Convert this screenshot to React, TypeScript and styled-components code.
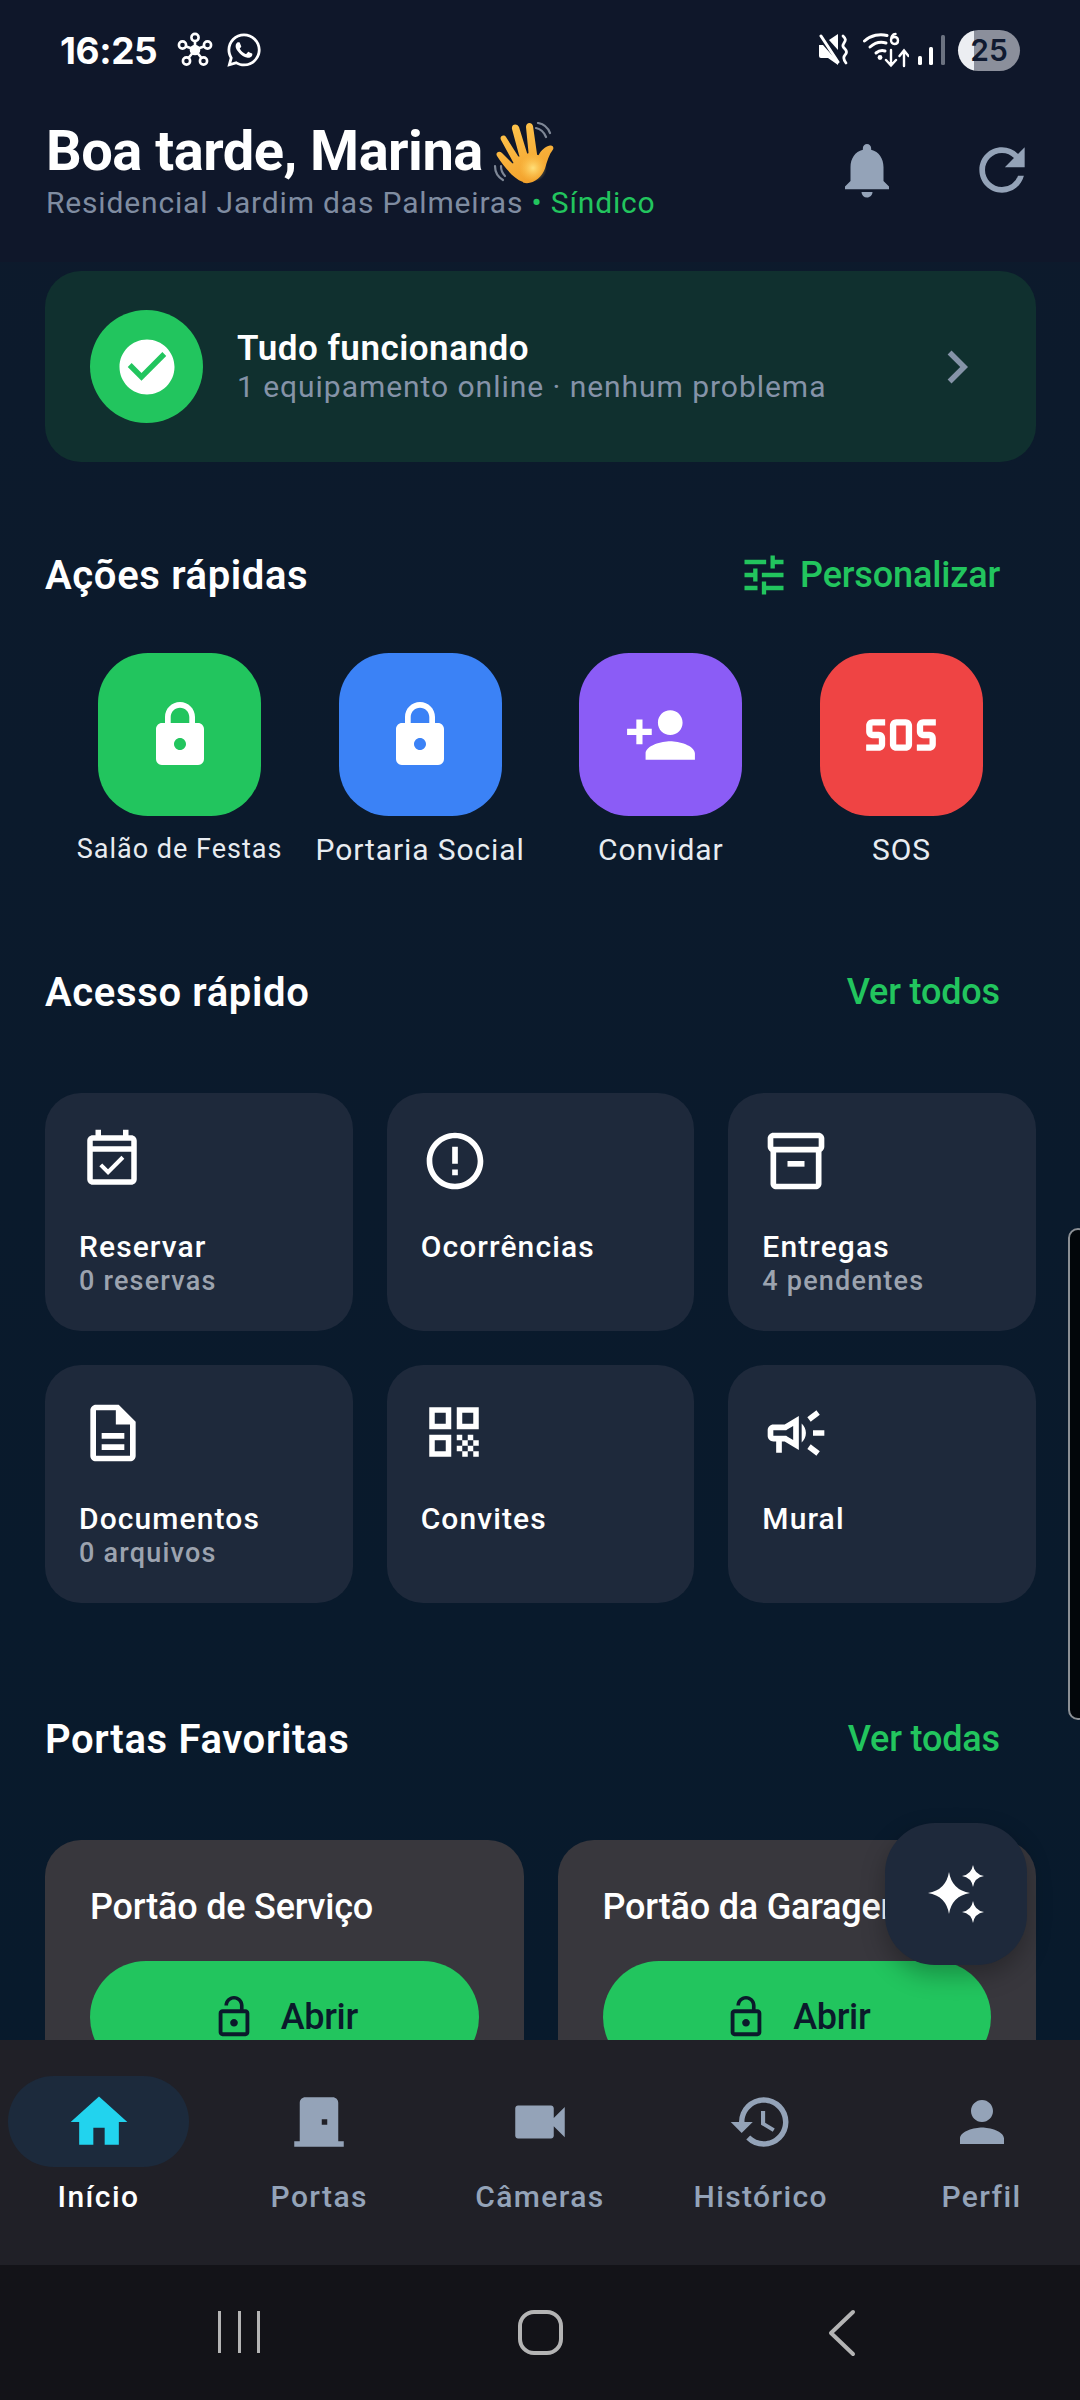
import React from "react";
import styled, { createGlobalStyle } from "styled-components";
import {
  MdLock,
  MdNotifications,
  MdRefresh,
  MdTune,
  MdPersonAdd,
  MdSos,
  MdOutlineEventAvailable,
  MdErrorOutline,
  MdOutlineInventory2,
  MdOutlineDescription,
  MdQrCode,
  MdOutlineCampaign,
  MdHome,
  MdDoorFront,
  MdVideocam,
  MdHistory,
  MdPerson,
  MdLockOpen,
  MdCheckCircle,
  MdChevronRight,
} from "react-icons/md";
import { FaWhatsapp } from "react-icons/fa";

const GlobalStyle = createGlobalStyle`
  html, body {
    margin: 0;
    padding: 0;
    background: #0a1a2b;
  }
  * {
    box-sizing: border-box;
  }
`;

const Screen = styled.div`
  position: relative;
  width: 1080px;
  height: 2400px;
  overflow: hidden;
  display: flex;
  flex-direction: column;
  font-family: Roboto, "Liberation Sans", sans-serif;
  background: linear-gradient(180deg, #0d1a2c 0%, #071a2c 100%);
  color: #ffffff;
`;

const Top = styled.div`
  height: 262px;
  background: #0f172a;
  flex: none;
`;

const StatusBar = styled.div`
  height: 118px;
  padding: 28px 60px 0 60px;
  display: flex;
  align-items: flex-start;
  justify-content: space-between;
`;

const StatusLeft = styled.div`
  display: flex;
  align-items: center;
  gap: 12px;
  height: 44px;
`;

const Clock = styled.span`
  font-family: Inter, Roboto, sans-serif;
  font-size: 37px;
  font-weight: 700;
  letter-spacing: -0.4px;
  margin-right: 8px;
`;

const StatusRight = styled.div`
  display: flex;
  align-items: center;
  gap: 9px;
  height: 44px;
`;

const Battery = styled.div`
  width: 62px;
  height: 41px;
  border-radius: 21px;
  background: linear-gradient(90deg, #eceef2 0 16px, #8b8f9b 16px 100%);
  display: flex;
  align-items: center;
  justify-content: center;
  color: #101a30;
  font-family: Inter, Roboto, sans-serif;
  font-size: 30px;
  font-weight: 600;
`;

const Header = styled.div`
  padding: 0 44px 0 46px;
  display: flex;
  justify-content: space-between;
`;

const Greeting = styled.h1`
  margin: 0;
  height: 66px;
  display: flex;
  align-items: center;
  gap: 10px;
  font-size: 56px;
  line-height: 66px;
  font-weight: 700;
  letter-spacing: -0.5px;
`;

const HandSlot = styled.span`
  display: flex;
  margin-top: 8px;
`;

const Place = styled.div`
  margin-top: 1px;
  font-size: 30px;
  line-height: 36px;
  letter-spacing: 0.83px;
  color: #7f8ca1;
`;

const Role = styled.span`
  color: #22c55e;
`;

const HeaderActions = styled.div`
  display: flex;
  align-items: center;
  gap: 68px;
  height: 68px;
  margin-top: 18px;
  color: #94a3b8;
`;

const Content = styled.div`
  flex: 1;
  padding: 9px 44px 0 45px;
  min-height: 0;
`;

const StatusCard = styled.div`
  height: 191px;
  border-radius: 36px;
  background: #10302f;
  display: flex;
  align-items: center;
  padding: 0 46px 0 45px;
`;

const StatusCircle = styled.div`
  width: 113px;
  height: 113px;
  border-radius: 50%;
  background: #22c55e;
  color: #ffffff;
  display: flex;
  align-items: center;
  justify-content: center;
  margin-right: 34px;
`;

const StatusText = styled.div`
  flex: 1;
`;

const StatusTitle = styled.div`
  font-size: 35px;
  font-weight: 600;
  line-height: 41px;
  letter-spacing: 0.5px;
`;

const StatusSub = styled.div`
  font-size: 30px;
  line-height: 36px;
  letter-spacing: 0.96px;
  color: #8593a8;
`;

const SectionHead = styled.div<{ $top: number }>`
  margin-top: ${(p) => p.$top}px;
  height: 56px;
  display: flex;
  align-items: center;
  justify-content: space-between;
  padding-right: 36px;
`;

const SectionTitle = styled.h2`
  margin: 0;
  font-size: 40px;
  font-weight: 600;
  letter-spacing: 0.65px;
`;

const SectionLink = styled.div`
  display: flex;
  align-items: center;
  gap: 10px;
  font-size: 36px;
  font-weight: 500;
  letter-spacing: -0.15px;
  color: #22c55e;
`;

const QuickRow = styled.div`
  margin-top: 50px;
  padding-left: 53px;
  display: flex;
  gap: 77.67px;
`;

const QuickItem = styled.div`
  width: 163px;
  display: flex;
  flex-direction: column;
  align-items: center;
`;

const QuickTile = styled.div<{ $color: string }>`
  width: 163px;
  height: 163px;
  border-radius: 50px;
  background: ${(p) => p.$color};
  display: flex;
  align-items: center;
  justify-content: center;
  color: #ffffff;
`;

const QuickLabel = styled.div<{ $small?: boolean }>`
  margin-top: ${(p) => (p.$small ? 15 : 16)}px;
  font-size: ${(p) => (p.$small ? 27 : 30)}px;
  line-height: 36px;
  letter-spacing: ${(p) => (p.$small ? 1 : 0.9)}px;
  white-space: nowrap;
  color: #e8ecf1;
`;

const AccessGrid = styled.div`
  margin-top: 73px;
  display: grid;
  grid-template-columns: repeat(3, 1fr);
  gap: 34px;
`;

const AccessCard = styled.div`
  height: 238px;
  border-radius: 36px;
  background: #1e293b;
  padding: 34px 34px 0;
`;

const AccessIcon = styled.div`
  height: 64px;
  color: #ffffff;
`;

const AccessTitle = styled.div`
  margin-top: 38px;
  font-size: 30px;
  line-height: 36px;
  font-weight: 500;
  letter-spacing: 1.1px;
`;

const AccessSub = styled.div`
  font-size: 27px;
  line-height: 33px;
  font-weight: 500;
  letter-spacing: 1.2px;
  color: #9ca3af;
`;

const DoorRow = styled.div`
  margin-top: 73px;
  display: grid;
  grid-template-columns: repeat(2, 1fr);
  gap: 34px;
`;

const DoorCard = styled.div`
  height: 300px;
  border-radius: 36px;
  background: #38373d;
  padding: 44px 45px 0;
`;

const DoorName = styled.div`
  font-size: 36px;
  line-height: 46px;
  font-weight: 500;
  letter-spacing: -0.2px;
  white-space: nowrap;
`;

const OpenButton = styled.div`
  margin-top: 31px;
  height: 112px;
  border-radius: 56px;
  background: #22c55e;
  color: #0b1a2b;
  display: flex;
  align-items: center;
  justify-content: center;
  gap: 24px;
  font-size: 36px;
  font-weight: 500;
  letter-spacing: -0.3px;
`;

const Fab = styled.div`
  position: absolute;
  left: 885px;
  top: 1823px;
  width: 142px;
  height: 142px;
  border-radius: 50px;
  background: #1e293b;
  box-shadow: 0 10px 24px rgba(0, 0, 0, 0.28);
  display: flex;
  align-items: center;
  justify-content: center;
  color: #ffffff;
  z-index: 2;
`;

const EdgeHandle = styled.div`
  position: absolute;
  left: 1068px;
  top: 1228px;
  width: 20px;
  height: 492px;
  border: 2px solid #8b8f94;
  border-radius: 12px;
  background: #02060a;
`;

const BottomNav = styled.nav`
  flex: none;
  position: relative;
  z-index: 1;
  height: 225px;
  background: #202027;
  padding: 36px 8px 0;
  display: flex;
  justify-content: space-between;
`;

const NavItem = styled.div`
  width: 181px;
  display: flex;
  flex-direction: column;
  align-items: center;
`;

const NavPill = styled.div<{ $active?: boolean }>`
  width: 181px;
  height: 91px;
  border-radius: 46px;
  background: ${(p) => (p.$active ? "#1c2a3c" : "transparent")};
  color: ${(p) => (p.$active ? "#22d3ee" : "#94a3b8")};
  display: flex;
  align-items: center;
  justify-content: center;
`;

const NavLabel = styled.div<{ $active?: boolean }>`
  margin-top: 12px;
  font-size: 30px;
  line-height: 36px;
  font-weight: 500;
  letter-spacing: 1.4px;
  white-space: nowrap;
  color: ${(p) => (p.$active ? "#ffffff" : "#94a3b8")};
`;

const SystemBar = styled.div`
  flex: none;
  position: relative;
  z-index: 1;
  height: 135px;
  background: #131318;
`;

const SysRecents = styled.div`
  position: absolute;
  left: 218px;
  top: 46px;
  width: 42px;
  height: 42px;
  border-left: 3px solid #b4b4b4;
  border-right: 3px solid #b4b4b4;
  display: flex;
  justify-content: center;
  &::before {
    content: "";
    width: 3px;
    background: #b4b4b4;
  }
`;

const SysHome = styled.div`
  position: absolute;
  left: 518px;
  top: 45px;
  width: 45px;
  height: 45px;
  border: 4px solid #b4b4b4;
  border-radius: 16px;
`;

const SysBack = styled.svg`
  position: absolute;
  left: 826px;
  top: 44px;
`;

const quick = [
  { label: "Salão de Festas", color: "#22c55e", icon: <MdLock size={72} />, small: true },
  { label: "Portaria Social", color: "#3b82f6", icon: <MdLock size={72} /> },
  { label: "Convidar", color: "#8b5cf6", icon: <MdPersonAdd size={74} /> },
  { label: "SOS", color: "#ef4444", icon: <MdSos size={76} /> },
];

const access = [
  { title: "Reservar", sub: "0 reservas", icon: <MdOutlineEventAvailable size={66} /> },
  { title: "Ocorrências", icon: <MdErrorOutline size={68} /> },
  { title: "Entregas", sub: "4 pendentes", icon: <MdOutlineInventory2 size={68} /> },
  { title: "Documentos", sub: "0 arquivos", icon: <MdOutlineDescription size={68} /> },
  { title: "Convites", icon: <MdQrCode size={66} /> },
  { title: "Mural", icon: <MdOutlineCampaign size={68} /> },
];

const nav = [
  { label: "Início", icon: <MdHome size={68} />, active: true },
  { label: "Portas", icon: <MdDoorFront size={66} /> },
  { label: "Câmeras", icon: <MdVideocam size={66} /> },
  { label: "Histórico", icon: <MdHistory size={66} /> },
  { label: "Perfil", icon: <MdPerson size={66} /> },
];

// small glyphs of the status bar, not in any icon package
const NetworkIcon = () => (
  <svg width="36" height="36" viewBox="0 0 36 36" fill="none" stroke="#fff" strokeWidth="2.6">
    <circle cx="18" cy="18" r="4" fill="#fff" />
    <circle cx="18" cy="5.5" r="3.6" />
    <circle cx="5.5" cy="13" r="3.6" />
    <circle cx="30.5" cy="13" r="3.6" />
    <circle cx="9.5" cy="29" r="3.6" />
    <circle cx="26.5" cy="29" r="3.6" />
    <path d="M18 9v6M9 14.5l6 2M27 14.5l-6 2M11.5 26l4-5M24.5 26l-4-5" />
  </svg>
);

const MuteIcon = () => (
  <svg width="36" height="32" viewBox="0 0 36 32" fill="none">
    <path d="M11 6l9-6v16z" fill="#fff" />
    <path d="M1 11h4l15 17v3l-10-7H3a2 2 0 0 1-2-2z" fill="#fff" />
    <path d="M3 2l17 26" stroke="#fff" strokeWidth="3" strokeLinecap="round" />
    <path d="M25 2c3 3 3 4 1 7s-1 4 1 6 2 4 0 6-2 4 1 8" stroke="#fff" strokeWidth="2.8" strokeLinecap="round" />
  </svg>
);

const WifiIcon = () => (
  <svg width="46" height="36" viewBox="0 0 46 36" fill="none" stroke="#fff" strokeLinecap="round">
    <path d="M1.500 9C8 3 17 1.500 24 3.500" strokeWidth="3" />
    <path d="M7 15c5-4.500 11-5.500 16-4" strokeWidth="3" />
    <path d="M13 21c3-2.500 6-3 9-2" strokeWidth="3" />
    <circle cx="17" cy="25.500" r="2.400" fill="#fff" stroke="none" />
    <path d="M28 8c0-3 1.500-6 4.500-6M28 8c0 2.500 1.500 4 3.500 4s3.500-1.500 3.500-3.500-1.500-3.500-3.500-3.500-3.500 1.500-3.500 3" strokeWidth="2.400" />
    <path d="M28 18v15m-5-5l5 5.500 5-5.500M41 34V19m-4.500 5l4.500-5.500 4.500 5.500" strokeWidth="2.400" />
  </svg>
);

const SignalIcon = () => (
  <svg width="31" height="30" viewBox="0 0 31 30">
    <rect x="0" y="21" width="4" height="9" rx="1.500" fill="#fff" />
    <rect x="11" y="12" width="4" height="18" rx="1.500" fill="#fff" />
    <rect x="23" y="0" width="4" height="30" rx="1.500" fill="#6b7280" />
  </svg>
);

const WavingHand = () => (
  <svg width="68" height="66" viewBox="0 0 68 66" fill="none">
    <defs>
      <linearGradient id="hand" x1="0.2" y1="0" x2="0.6" y2="1">
        <stop offset="0" stopColor="#ffc54d" />
        <stop offset="1" stopColor="#f2a12c" />
      </linearGradient>
      <radialGradient id="palm" cx="0.5" cy="0.5" r="0.5">
        <stop offset="0" stopColor="#ffe07a" />
        <stop offset="1" stopColor="#ffc54d" stopOpacity="0" />
      </radialGradient>
    </defs>
    <path
      d="M30 60C20 56 12 46 4 34c-2-3 2-6 5-3l10 10c1 1 2 0 1-1L8 18c-2-4 3-6 5-3l12 19c1 1 2 1 1-1L19 7c-1-5 5-6 7-2l8 26c.5 1 1.500 1 1.500-.5L33 5c0-5 6-5 7-1l4 28c.2 1.500 1.500 1.500 2 .5 2-4 6-8 11-9 3-.5 4 2 3 4-4 5-6 12-8 19-3 9-13 17-22 14z"
      fill="url(#hand)"
    />
    <ellipse cx="40" cy="46" rx="14" ry="14" fill="url(#palm)" />
    <path d="M43 6c5 1 8 4 10 9M45 1c6 1 10 5 12 10" stroke="#7e8796" strokeWidth="2.200" strokeLinecap="round" />
    <path d="M2 44c0 6 3 11 8 14M8 44c0 4 1 7 4 10" stroke="#7e8796" strokeWidth="2.200" strokeLinecap="round" />
  </svg>
);

const star = (x: number, y: number, r: number) => {
  const c = r * 0.14;
  return `M${x} ${y - r}Q${x + c} ${y - c} ${x + r} ${y}Q${x + c} ${y + c} ${x} ${y + r}Q${x - c} ${y + c} ${x - r} ${y}Q${x - c} ${y - c} ${x} ${y - r}Z`;
};

const Sparkles = () => (
  <svg width="72" height="72" viewBox="0 0 72 72" fill="#fff">
    <path d={star(29, 35, 21)} />
    <path d={star(53, 18, 11)} />
    <path d={star(53, 54, 11)} />
  </svg>
);

const App = () => {
  return (
    <Screen>
      <GlobalStyle />
      <Top>
        <StatusBar>
          <StatusLeft>
            <Clock>16:25</Clock>
            <NetworkIcon />
            <FaWhatsapp size={38} />
          </StatusLeft>
          <StatusRight>
            <MuteIcon />
            <WifiIcon />
            <SignalIcon />
            <Battery>25</Battery>
          </StatusRight>
        </StatusBar>
        <Header>
          <div>
            <Greeting>
              Boa tarde, Marina
              <HandSlot>
                <WavingHand />
              </HandSlot>
            </Greeting>
            <Place>
              Residencial Jardim das Palmeiras <Role>• Síndico</Role>
            </Place>
          </div>
          <HeaderActions>
            <MdNotifications size={66} />
            <MdRefresh size={68} />
          </HeaderActions>
        </Header>
      </Top>
      <Content>
        <StatusCard>
          <StatusCircle>
            <MdCheckCircle size={66} />
          </StatusCircle>
          <StatusText>
            <StatusTitle>Tudo funcionando</StatusTitle>
            <StatusSub>1 equipamento online · nenhum problema</StatusSub>
          </StatusText>
          <MdChevronRight size={66} color="#8593a8" />
        </StatusCard>

        <SectionHead $top={85}>
          <SectionTitle>Ações rápidas</SectionTitle>
          <SectionLink>
            <MdTune size={52} />
            Personalizar
          </SectionLink>
        </SectionHead>
        <QuickRow>
          {quick.map((q) => (
            <QuickItem key={q.label}>
              <QuickTile $color={q.color}>{q.icon}</QuickTile>
              <QuickLabel $small={q.small}>{q.label}</QuickLabel>
            </QuickItem>
          ))}
        </QuickRow>

        <SectionHead $top={96}>
          <SectionTitle>Acesso rápido</SectionTitle>
          <SectionLink>Ver todos</SectionLink>
        </SectionHead>
        <AccessGrid>
          {access.map((a) => (
            <AccessCard key={a.title}>
              <AccessIcon>{a.icon}</AccessIcon>
              <AccessTitle>{a.title}</AccessTitle>
              {a.sub && <AccessSub>{a.sub}</AccessSub>}
            </AccessCard>
          ))}
        </AccessGrid>

        <SectionHead $top={108}>
          <SectionTitle>Portas Favoritas</SectionTitle>
          <SectionLink>Ver todas</SectionLink>
        </SectionHead>
        <DoorRow>
          {["Portão de Serviço", "Portão da Garagem"].map((name) => (
            <DoorCard key={name}>
              <DoorName>{name}</DoorName>
              <OpenButton>
                <MdLockOpen size={46} />
                Abrir
              </OpenButton>
            </DoorCard>
          ))}
        </DoorRow>
      </Content>

      <EdgeHandle />
      <Fab>
        <Sparkles />
      </Fab>

      <BottomNav>
        {nav.map((n) => (
          <NavItem key={n.label}>
            <NavPill $active={n.active}>{n.icon}</NavPill>
            <NavLabel $active={n.active}>{n.label}</NavLabel>
          </NavItem>
        ))}
      </BottomNav>
      <SystemBar>
        <SysRecents />
        <SysHome />
        <SysBack width="32" height="48" viewBox="0 0 32 48" fill="none">
          <path d="M27 3L5 24l22 21" stroke="#b4b4b4" strokeWidth="4" strokeLinecap="round" strokeLinejoin="round" />
        </SysBack>
      </SystemBar>
    </Screen>
  );
};

export default App;
